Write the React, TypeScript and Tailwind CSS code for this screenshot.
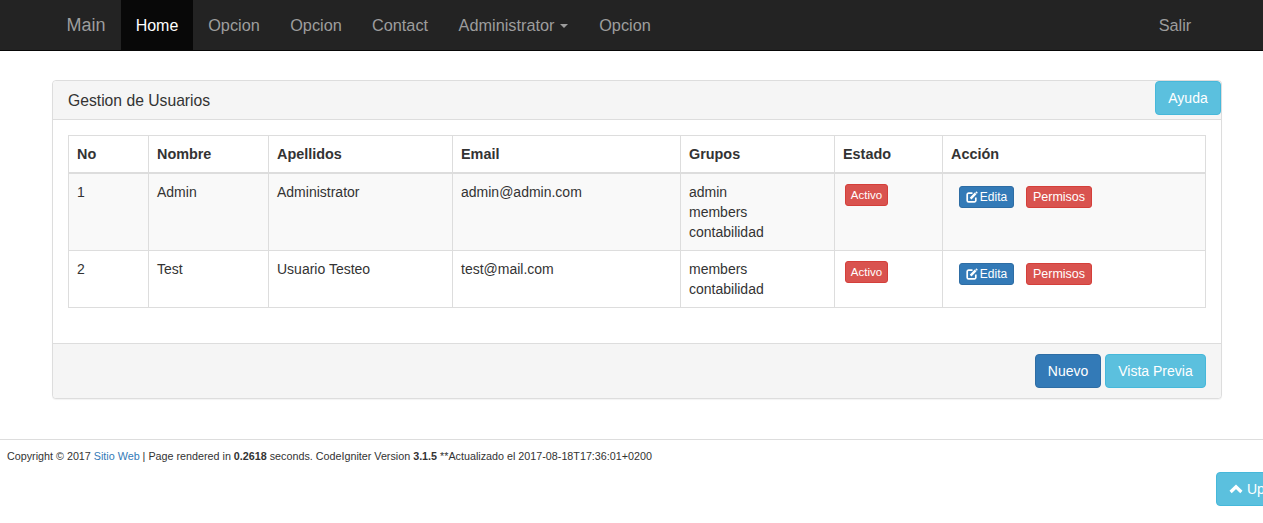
const navItems = [
  { label: 'Opcion', w: 'w-[82px]' },
  { label: 'Opcion', w: 'w-[82px]' },
  { label: 'Contact', w: 'w-[86px]' },
];

const users = [
  {
    id: '1',
    nombre: 'Admin',
    apellidos: 'Administrator',
    email: 'admin@admin.com',
    grupos: ['admin', 'members', 'contabilidad'],
    rowClass: 'bg-[#f9f9f9]',
  },
  {
    id: '2',
    nombre: 'Test',
    apellidos: 'Usuario Testeo',
    email: 'test@mail.com',
    grupos: ['members', 'contabilidad'],
    rowClass: 'bg-white',
  },
];

const headers = ['No', 'Nombre', 'Apellidos', 'Email', 'Grupos', 'Estado', 'Acción'];

function EditIcon() {
  return (
    <svg viewBox="0 0 12 12" className="size-[12px] shrink-0" fill="none" stroke="currentColor">
      <path d="M6.5 2.2H2.6A1.4 1.4 0 0 0 1.2 3.6v5.8a1.4 1.4 0 0 0 1.4 1.4h5.8a1.4 1.4 0 0 0 1.4-1.4V6.6" strokeWidth="1.7" />
      <path d="M4.6 7.6 9.6 2.4" strokeWidth="2.4" />
      <path d="M10.4 0.6 11.6 1.8 10.8 2.6 9.6 1.4Z" fill="currentColor" strokeWidth="0.4" />
    </svg>
  );
}

function ChevronUpIcon() {
  return (
    <svg viewBox="0 0 14 10" className="h-[10px] w-[14px] shrink-0" fill="none" stroke="currentColor">
      <path d="M1.6 8 7 2.8 12.4 8" strokeWidth="3.2" />
    </svg>
  );
}

export default function App() {
  return (
    <div className="relative h-[523px] overflow-hidden bg-white font-['Liberation_Sans',Arial,sans-serif] text-[14px] leading-5 text-[#333]">
      {/* navbar */}
      <nav className="flex h-[51px] border-b border-[#080808] bg-[#232323] pl-[52px] text-[16.3px] text-[#9d9d9d]">
        <a className="flex w-[69px] items-center justify-center pr-[1px] text-[18px]">Main</a>
        <a className="flex w-[72px] items-center justify-center bg-[#080808] pt-[2px] text-[16px] text-white">Home</a>
        {navItems.map((item, i) => (
          <a key={i} className={`flex items-center justify-center ${item.w}`}>
            {item.label}
          </a>
        ))}
        <a className="flex w-[141px] items-center justify-center">
          Administrator
          <span className="ml-[6px] mt-[2px] border-x-[4px] border-t-[4px] border-x-transparent border-t-[#9d9d9d]" />
        </a>
        <a className="flex w-[82px] items-center justify-center">Opcion</a>
        <a className="ml-auto mr-[56px] flex w-[64px] items-center justify-center">Salir</a>
      </nav>

      {/* panel */}
      <main className="px-[52px] pt-[29px] pr-[41px]">
        <section className="rounded border border-[#ddd] bg-white shadow-[0_1px_1px_rgba(0,0,0,0.05)]">
          <header className="flex h-[39px] items-start justify-between rounded-t border-b border-[#ddd] bg-[#f5f5f5] pl-[15px]">
            <h3 className="mt-[10px] text-[15.7px] leading-5">Gestion de Usuarios</h3>
            <button className="h-[34px] w-[66px] rounded border border-[#46b8da] bg-[#5bc0de] text-white">Ayuda</button>
          </header>

          <div className="px-[15px] pt-[15px] pb-[35px]">
            <table className="w-[1137px] table-fixed border-collapse border border-[#ddd]">
              <colgroup>
                <col className="w-[80px]" />
                <col className="w-[120px]" />
                <col className="w-[184px]" />
                <col className="w-[228px]" />
                <col className="w-[154px]" />
                <col className="w-[108px]" />
                <col className="w-[263px]" />
              </colgroup>
              <thead>
                <tr className="h-[37px]">
                  {headers.map((h) => (
                    <th key={h} className="border-x border-b-2 border-[#ddd] px-2 text-left text-[14.4px] font-bold">
                      {h}
                    </th>
                  ))}
                </tr>
              </thead>
              <tbody>
                {users.map((u) => (
                  <tr key={u.id} className={u.rowClass}>
                    <td className="border border-[#ddd] p-2 align-top">{u.id}</td>
                    <td className="border border-[#ddd] p-2 align-top">{u.nombre}</td>
                    <td className="border border-[#ddd] p-2 align-top">{u.apellidos}</td>
                    <td className="border border-[#ddd] p-2 align-top">{u.email}</td>
                    <td className="border border-[#ddd] p-2 align-top">
                      {u.grupos.map((g) => (
                        <div key={g}>{g}</div>
                      ))}
                    </td>
                    <td className="border border-[#ddd] px-2 py-[10px] align-top">
                      <span className="ml-[2px] flex h-[22px] w-[43px] items-center justify-center rounded-[3px] border border-[#d43f3a] bg-[#d9534f] text-[11.5px] text-white">
                        Activo
                      </span>
                    </td>
                    <td className="border border-[#ddd] px-2 py-[12px] align-top">
                      <div className="ml-[8px] flex gap-[12px]">
                        <button className="flex h-[22px] w-[55px] items-center justify-center gap-[2px] rounded-[3px] border border-[#2e6da4] bg-[#337ab7] text-[12px] text-white">
                          <EditIcon />
                          Edita
                        </button>
                        <button className="h-[22px] w-[66px] rounded-[3px] border border-[#d43f3a] bg-[#d9534f] text-[12.5px] text-white">
                          Permisos
                        </button>
                      </div>
                    </td>
                  </tr>
                ))}
              </tbody>
            </table>
          </div>

          <footer className="flex h-[55px] justify-end gap-[4px] rounded-b border-t border-[#ddd] bg-[#f5f5f5] pt-[10px] pr-[15px]">
            <button className="h-[34px] w-[66px] rounded border border-[#2e6da4] bg-[#337ab7] text-white">Nuevo</button>
            <button className="h-[34px] w-[101px] rounded border border-[#46b8da] bg-[#5bc0de] text-white">Vista Previa</button>
          </footer>
        </section>
      </main>

      {/* page footer */}
      <footer className="mt-[40px] border-t border-[#ddd] pt-[9px] pl-[7px] text-[10.75px] leading-[14px] text-[#333]">
        Copyright © 2017 <a className="text-[#337ab7]">Sitio Web</a> | Page rendered in <strong>0.2618</strong> seconds. CodeIgniter Version <strong>3.1.5</strong> **Actualizado el 2017-08-18T17:36:01+0200
      </footer>

      {/* floating scroll-up button, clipped by the window edge */}
      <button className="absolute left-[1216px] top-[472px] flex h-[34px] w-[70px] items-center gap-[4px] rounded border border-[#46b8da] bg-[#5bc0de] pl-[12px] text-white">
        <ChevronUpIcon />
        Up
      </button>
    </div>
  );
}
